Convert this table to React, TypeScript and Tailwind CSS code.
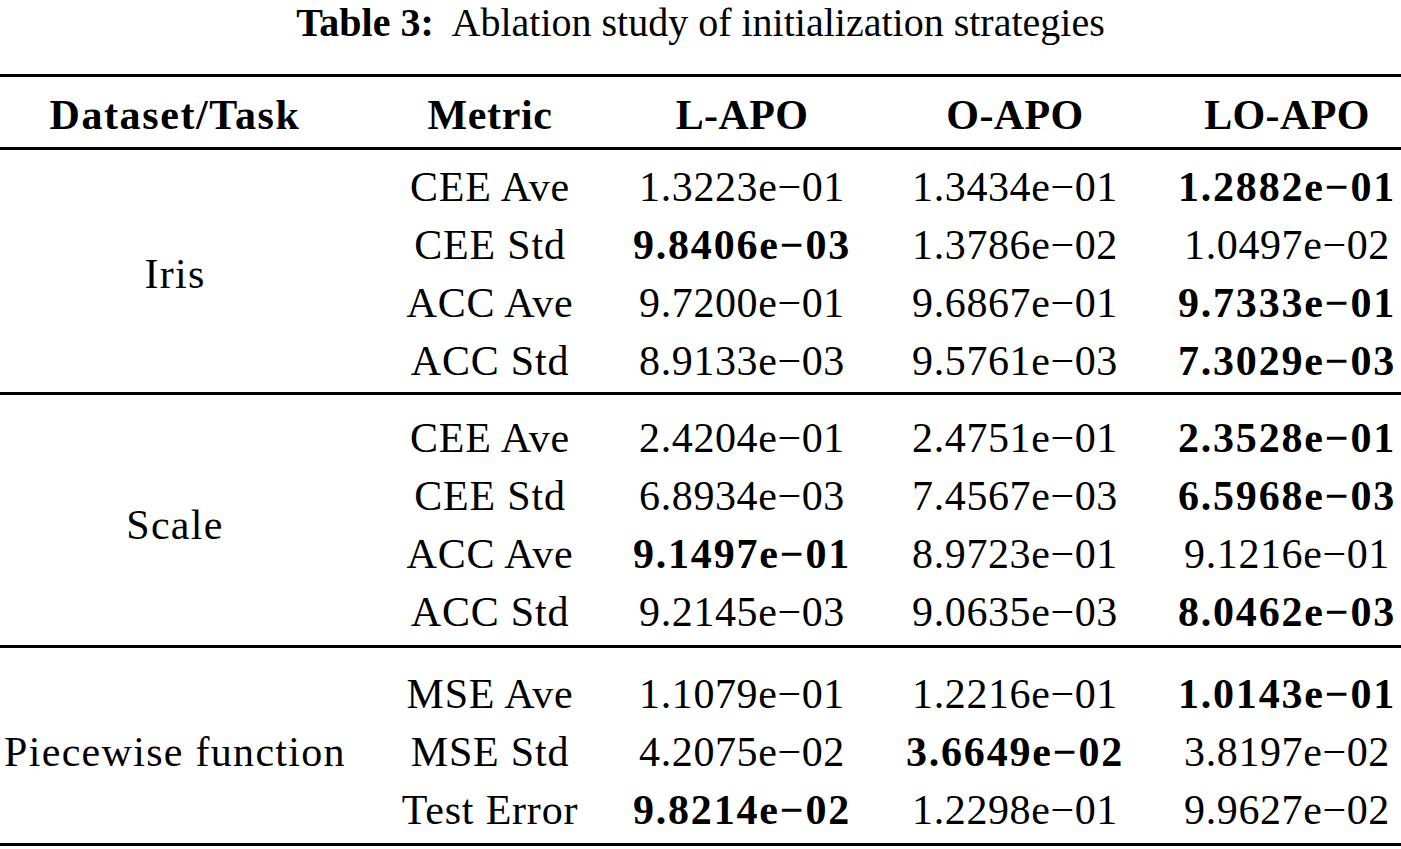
import React from "react";

type Cell = [string, boolean];
type Row = { metric: string; vals: Cell[] };
type Section = { name: string; pad: string; rows: Row[] };

const sections: Section[] = [
  {
    name: "Iris",
    pad: "pt-[8px] pb-[2px]",
    rows: [
      { metric: "CEE Ave", vals: [["1.3223e−01", false], ["1.3434e−01", false], ["1.2882e−01", true]] },
      { metric: "CEE Std", vals: [["9.8406e−03", true], ["1.3786e−02", false], ["1.0497e−02", false]] },
      { metric: "ACC Ave", vals: [["9.7200e−01", false], ["9.6867e−01", false], ["9.7333e−01", true]] },
      { metric: "ACC Std", vals: [["8.9133e−03", false], ["9.5761e−03", false], ["7.3029e−03", true]] },
    ],
  },
  {
    name: "Scale",
    pad: "pt-[14px] pb-[4px]",
    rows: [
      { metric: "CEE Ave", vals: [["2.4204e−01", false], ["2.4751e−01", false], ["2.3528e−01", true]] },
      { metric: "CEE Std", vals: [["6.8934e−03", false], ["7.4567e−03", false], ["6.5968e−03", true]] },
      { metric: "ACC Ave", vals: [["9.1497e−01", true], ["8.9723e−01", false], ["9.1216e−01", false]] },
      { metric: "ACC Std", vals: [["9.2145e−03", false], ["9.0635e−03", false], ["8.0462e−03", true]] },
    ],
  },
  {
    name: "Piecewise function",
    pad: "pt-[17px] pb-[4px]",
    rows: [
      { metric: "MSE Ave", vals: [["1.1079e−01", false], ["1.2216e−01", false], ["1.0143e−01", true]] },
      { metric: "MSE Std", vals: [["4.2075e−02", false], ["3.6649e−02", true], ["3.8197e−02", false]] },
      { metric: "Test Error", vals: [["9.8214e−02", true], ["1.2298e−01", false], ["9.9627e−02", false]] },
    ],
  },
];

function Rule() {
  return <div className="h-[3px] w-full bg-black" />;
}

export default function App() {
  return (
    <div className="w-[1401px] h-[849px] bg-white text-black font-['Liberation_Serif',serif] overflow-hidden">
      <div className="h-[74px] text-center text-[40px] leading-[46px]">
        <span className="font-bold">Table 3:</span>
        <span>{"\u00a0 Ablation study of initialization strategies"}</span>
      </div>
      <Rule />
      <div className="h-[70px] pt-[9px] grid grid-cols-[350px_280px_224px_322px_222px] text-[42px] leading-[58px] font-bold text-center">
        <div className="tracking-[1.6px]">Dataset/Task</div>
        <div className="tracking-[0.6px]">Metric</div>
        <div className="tracking-[0.4px]">L-APO</div>
        <div className="tracking-[0.4px]">O-APO</div>
        <div className="tracking-[0.4px]">LO-APO</div>
      </div>
      <Rule />
      {sections.map((s) => (
        <React.Fragment key={s.name}>
          <div className={`flex ${s.pad} text-[42px] leading-[58px]`}>
            <div className="w-[350px] flex items-center justify-center tracking-[1.3px]">{s.name}</div>
            <div className="grid grid-cols-[280px_224px_322px_222px] text-center">
              {s.rows.map((r) => (
                <React.Fragment key={r.metric}>
                  <div className="h-[58px] tracking-[0.8px]">{r.metric}</div>
                  {r.vals.map(([v, b], i) => (
                    <div
                      key={i}
                      className={b ? "h-[58px] font-bold tracking-[1.8px]" : "h-[58px] tracking-[0.6px]"}
                    >
                      {v}
                    </div>
                  ))}
                </React.Fragment>
              ))}
            </div>
          </div>
          <Rule />
        </React.Fragment>
      ))}
    </div>
  );
}
